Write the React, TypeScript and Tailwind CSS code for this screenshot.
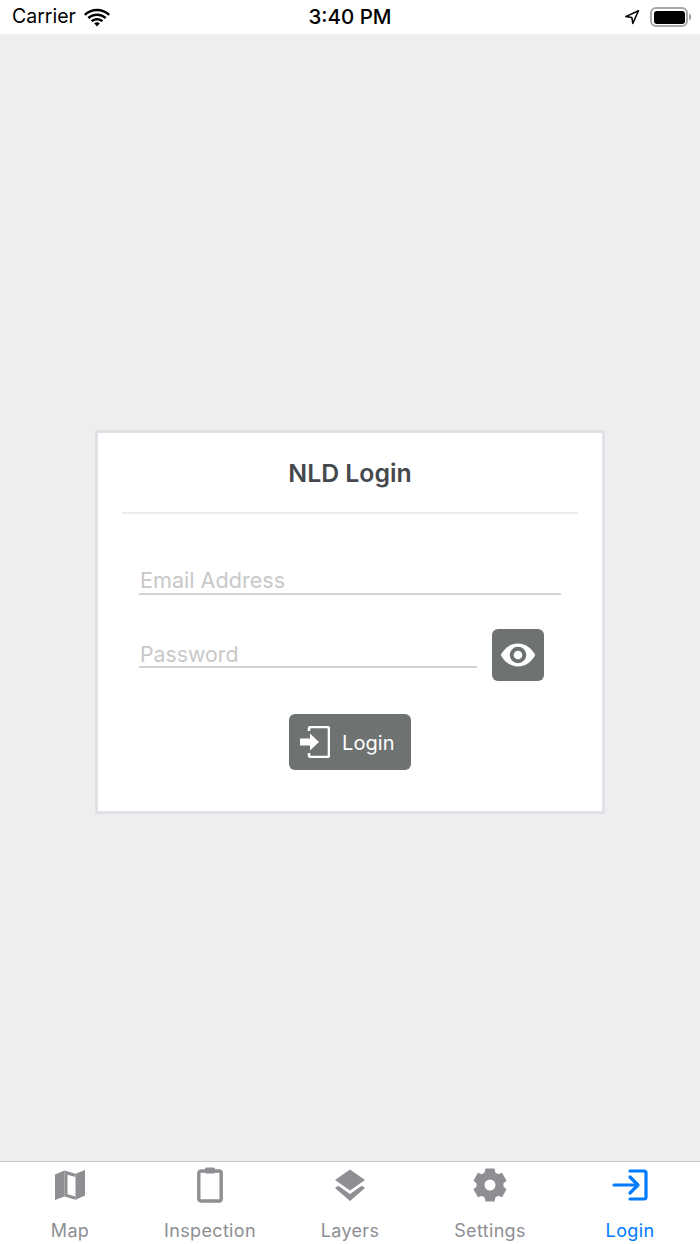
import React from "react";

const Wifi = () => (
  <svg width="26" height="19" viewBox="0 0 26 19" fill="#000">
    <path d="M13 3.200c-4.400 0-8.400 1.700-11.400 4.500L0 6C3.400 2.700 8 .7 13 .7S22.600 2.700 26 6l-1.600 1.700C21.400 4.900 17.400 3.200 13 3.200z" />
    <path d="M13 8c-3 0-5.700 1.100-7.800 3L3.400 9.100C6 6.800 9.300 5.400 13 5.400s7 1.400 9.600 3.700L20.800 11C18.700 9.100 16 8 13 8z" />
    <path d="M13 12.400c-1.800 0-3.400.7-4.600 1.700L6.700 12.300c1.700-1.500 3.900-2.400 6.300-2.400s4.600.9 6.300 2.400l-1.700 1.800c-1.200-1-2.800-1.700-4.600-1.700z" />
    <path d="M13 14.300c-1.100 0-2 .4-2.800 1L13 18.600l2.800-3.300c-.8-.6-1.700-1-2.800-1z" />
  </svg>
);

const Arrow = () => (
  <svg width="16" height="16" viewBox="0 0 16 16" fill="none" stroke="#000" strokeWidth="1.500" strokeLinejoin="round">
    <path d="M14.500 1.800 1.800 7.600l6 .8 1 6z" />
  </svg>
);

const Battery = () => (
  <div className="flex items-center">
    <div className="w-[38px] h-[20px] rounded-[6px] border-2 border-[#a8a8a8] p-[1.500px]">
      <div className="w-full h-full rounded-[3px] bg-black" />
    </div>
    <div className="w-[2px] h-[6px] rounded-r-sm bg-[#9a9a9a] ml-[1px]" />
  </div>
);

const MapIcon = () => (
  <svg width="32" height="32" viewBox="0 0 32 32" fill="#8e8e93">
    <path d="M1 5.500 10.500 1.500v26L1 31z" />
    <path d="M21.500 4.800 31 1v25.500L21.500 30.800z" />
    <path d="M10.500 1.500 21.500 4.800v3.200L13.500 5.800v19.500l8 2.300v3.200L10.500 27.500z" />
  </svg>
);

const Clipboard = () => (
  <svg width="26" height="36" viewBox="0 0 26 36" fill="none">
    <rect x="1.800" y="4" width="22.400" height="30" rx="2" stroke="#8e8e93" strokeWidth="3.400" />
    <rect x="8" y="0.500" width="10" height="6" rx="1.500" fill="#8e8e93" />
  </svg>
);

const Layers = () => (
  <svg width="32" height="33" viewBox="0 0 32 33" fill="#8e8e93">
    <path d="M16 0.500 31 11 16 21.500 1 11z" />
    <path d="M4.300 16.800 16 25l11.700-8.200 3.300 2.300-15 13-15-13z" />
  </svg>
);

const Gear = () => {
  const teeth = [0, 60, 120, 180, 240, 300];
  return (
    <svg width="34" height="34" viewBox="0 0 34 34">
      <g fill="#8e8e93">
        {teeth.map((a) => (
          <path key={a} d="M12.500 0.500h9l1.400 7h-11.800z" transform={`rotate(${a} 17 17)`} />
        ))}
      </g>
      <circle cx="17" cy="17" r="9.500" fill="none" stroke="#8e8e93" strokeWidth="8" />
    </svg>
  );
};

const TabLogin = () => (
  <svg width="36" height="32" viewBox="0 0 36 32" fill="none" stroke="#007aff" strokeWidth="3.200" strokeLinecap="round" strokeLinejoin="round">
    <path d="M18 2h14a2 2 0 0 1 2 2v24a2 2 0 0 1-2 2H18" />
    <path d="M2 16h23" />
    <path d="M18 8l8 8-8 8" />
  </svg>
);

const Tab = ({ label, active, icon }: { label: string; active?: boolean; icon: React.ReactNode }) => (
  <div className="flex-1 flex flex-col items-center">
    <div className="h-[36px] mt-[5px] flex items-center justify-center">{icon}</div>
    <div className={`mt-[16px] text-[18px] leading-[24px] tracking-[0.35px] ${active ? "text-[#007aff]" : "text-[#8e8e93]"}`}>{label}</div>
  </div>
);

export default function App() {
  return (
    <div className="w-[700px] h-[1244px] flex flex-col bg-[#eeeeee] font-['Inter','Liberation_Sans',sans-serif]">
      <div className="h-[34px] bg-white relative flex items-center justify-between pl-[12px] pr-[9px]">
        <div className="flex items-center gap-[8px] text-[19.500px] text-black">
          <span>Carrier</span>
          <Wifi />
        </div>
        <div className="absolute left-0 right-0 text-center text-[20.500px] font-medium text-black">3:40 PM</div>
        <div className="flex items-center gap-[10px]">
          <Arrow />
          <Battery />
        </div>
      </div>

      <main className="flex-1 flex flex-col items-center pt-[396px]">
        <div className="w-[510px] h-[384px] bg-white border-[3px] border-[#dfe3e8] px-[24px]">
          <h1 className="h-[81px] pt-[24px] text-center text-[24.800px] leading-[32px] font-semibold text-[#45484c] border-b-2 border-[#ececec]">NLD Login</h1>
          <div className="px-[17px] mt-[52px]">
            <div className="h-[29px] pt-[1px] pl-[1px] border-b-2 border-[#d2d2d2] text-[21.600px] leading-[26px] text-[#c8c8c8]">Email Address</div>
            <div className="flex items-start mt-[34px]">
              <div className="w-[338px] mt-[9px] h-[30px] pt-[3px] pl-[1px] border-b-2 border-[#d2d2d2] text-[21.300px] leading-[26px] text-[#c8c8c8]">Password</div>
              <button className="ml-[15px] w-[52px] h-[52px] rounded-[6px] bg-[#6e7372] flex items-center justify-center">
                <svg width="36" height="26" viewBox="0 0 36 26">
                  <path d="M18 1.500C10 1.500 3.800 7 .8 13c3 6 9.200 11.500 17.200 11.500S32.200 19 35.200 13C32.200 7 26 1.500 18 1.500z" fill="#fff" />
                  <circle cx="18" cy="13" r="6.300" fill="none" stroke="#6e7372" strokeWidth="4" />
                </svg>
              </button>
            </div>
          </div>
          <div className="flex justify-center mt-[33px]">
            <button className="w-[122px] h-[56px] rounded-[6px] bg-[#6e7372] flex items-center pl-[11px] text-white">
              <svg width="30" height="32" viewBox="0 0 30 32" fill="none">
                <path d="M9 5V3a2 2 0 0 1 2-2h16a2 2 0 0 1 2 2v26a2 2 0 0 1-2 2H11a2 2 0 0 1-2-2v-2" stroke="#fff" strokeWidth="2.600" strokeLinejoin="round" />
                <path d="M0 12.500h10V7.500l9 8.500-9 8.500v-5H0z" fill="#fff" />
              </svg>
              <span className="ml-[12px] text-[20px] leading-[24px] mt-[1px] tracking-[0.1px]">Login</span>
            </button>
          </div>
        </div>
      </main>

      <nav className="h-[83px] bg-white border-t border-[#c6c6c8] flex">
        <Tab label="Map" icon={<MapIcon />} />
        <Tab label="Inspection" icon={<Clipboard />} />
        <Tab label="Layers" icon={<Layers />} />
        <Tab label="Settings" icon={<Gear />} />
        <Tab label="Login" active icon={<TabLogin />} />
      </nav>
    </div>
  );
}
